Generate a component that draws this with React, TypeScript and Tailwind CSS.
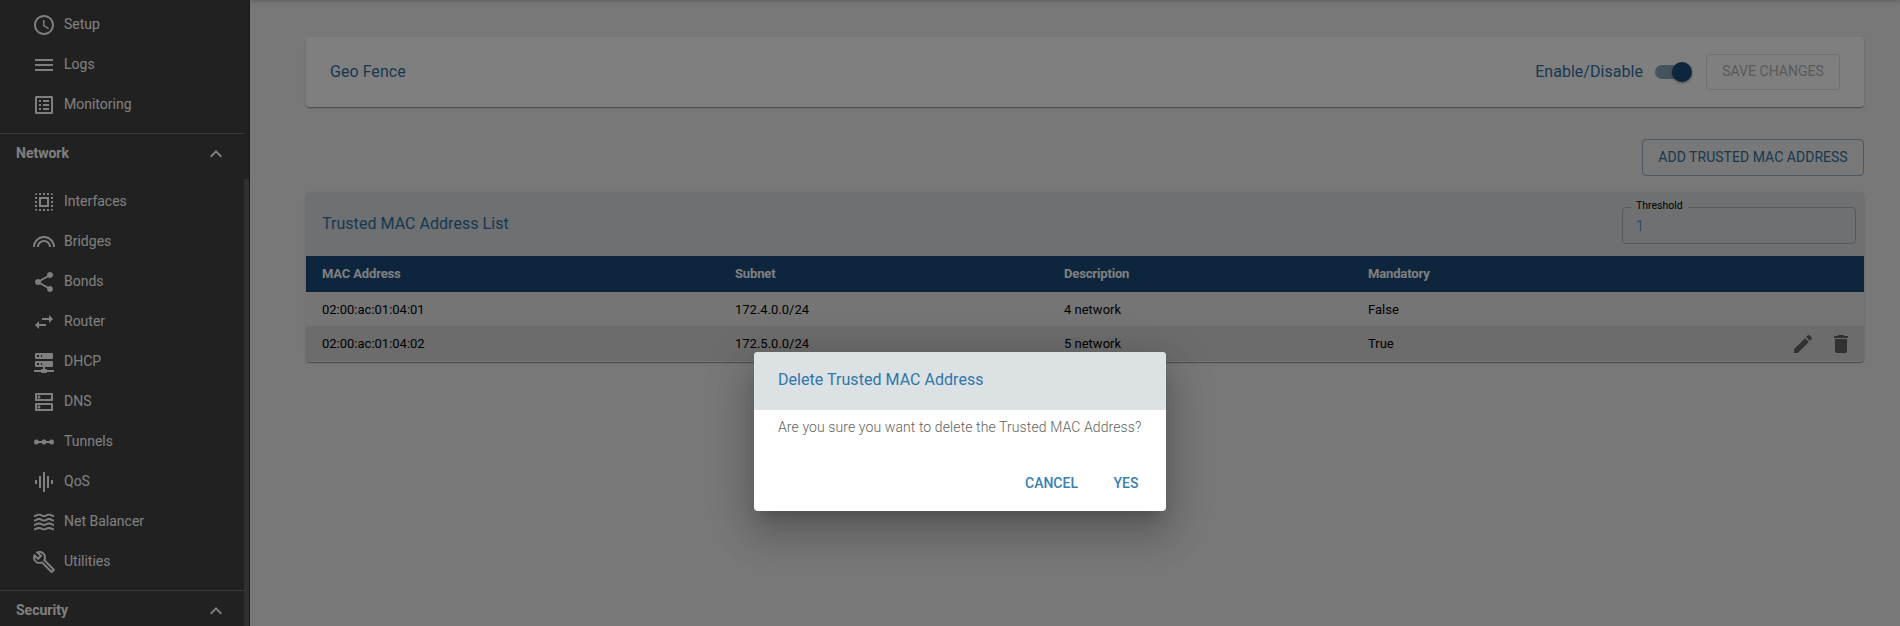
import type { ReactNode } from "react";
import {
  MdAccessTime,
  MdDelete,
  MdEdit,
  MdGraphicEq,
  MdKeyboardArrowUp,
  MdLinearScale,
  MdListAlt,
  MdMenu,
  MdOutlineBuild,
  MdOutlineDns,
  MdOutlineLooks,
  MdSelectAll,
  MdShare,
  MdSwapHoriz,
  MdWaves,
} from "react-icons/md";

function ServerNetworkIcon() {
  return (
    <svg viewBox="0 0 24 24" width="24" height="24" fill="currentColor">
      <path d="M13,19H14A1,1 0 0,1 15,20H22V22H15A1,1 0 0,1 14,23H10A1,1 0 0,1 9,22H2V20H9A1,1 0 0,1 10,19H11V17H4A1,1 0 0,1 3,16V12A1,1 0 0,1 4,11H20A1,1 0 0,1 21,12V16A1,1 0 0,1 20,17H13V19M4,3H20A1,1 0 0,1 21,4V8A1,1 0 0,1 20,9H4A1,1 0 0,1 3,8V4A1,1 0 0,1 4,3M9,7H10V5H9V7M9,15H10V13H9V15M5,5V7H7V5H5M5,13V15H7V13H5Z" />
    </svg>
  );
}

const systemItems = [
  { label: "Setup", icon: <MdAccessTime size={24} /> },
  { label: "Logs", icon: <MdMenu size={24} /> },
  { label: "Monitoring", icon: <MdListAlt size={24} /> },
];

const networkItems = [
  { label: "Interfaces", icon: <MdSelectAll size={24} /> },
  { label: "Bridges", icon: <MdOutlineLooks size={24} /> },
  { label: "Bonds", icon: <MdShare size={24} /> },
  { label: "Router", icon: <MdSwapHoriz size={24} /> },
  { label: "DHCP", icon: <ServerNetworkIcon /> },
  { label: "DNS", icon: <MdOutlineDns size={24} /> },
  { label: "Tunnels", icon: <MdLinearScale size={24} /> },
  { label: "QoS", icon: <MdGraphicEq size={24} /> },
  { label: "Net Balancer", icon: <MdWaves size={24} /> },
  { label: "Utilities", icon: <MdOutlineBuild size={24} /> },
];

const rows = [
  { mac: "02:00:ac:01:04:01", subnet: "172.4.0.0/24", description: "4 network", mandatory: "False" },
  { mac: "02:00:ac:01:04:02", subnet: "172.5.0.0/24", description: "5 network", mandatory: "True" },
];

function NavItem({ label, icon }: { label: string; icon: ReactNode }) {
  return (
    <li className="flex h-10 items-center gap-2 pl-8">
      {icon}
      <span className="pb-0.5 text-sm leading-5">{label}</span>
    </li>
  );
}

function SectionHeader({ label }: { label: string }) {
  return (
    <div className="flex h-[41px] items-center justify-between border-t border-[#757575] pr-4 pl-4">
      <span className="pb-0.5 text-sm font-bold">{label}</span>
      <MdKeyboardArrowUp size={24} />
    </div>
  );
}

function Sidebar() {
  return (
    <aside className="flex h-full w-[250px] shrink-0 border-r border-[#303030] bg-[#424242] text-white">
      <nav className="w-[244px] shrink-0">
        <ul className="pt-[5px] pb-2">
          {systemItems.map((item) => (
            <NavItem key={item.label} {...item} />
          ))}
        </ul>
        <SectionHeader label="Network" />
        <ul className="pt-2 pb-2">
          {networkItems.map((item) => (
            <NavItem key={item.label} {...item} />
          ))}
        </ul>
        <SectionHeader label="Security" />
      </nav>
      <div className="mt-[179px] w-[5px] bg-[#606060]" />
    </aside>
  );
}

const cardShadow =
  "shadow-[0_2px_1px_-1px_rgba(0,0,0,0.2),0_1px_1px_0_rgba(0,0,0,0.14),0_1px_3px_0_rgba(0,0,0,0.12)]";

function GeoFenceCard() {
  return (
    <section className={`flex h-[70px] items-center justify-between rounded bg-white px-6 ${cardShadow}`}>
      <h2 className="text-base tracking-[0.04px] text-[#32719f]">Geo Fence</h2>
      <div className="flex items-center">
        <span className="text-base tracking-[0.04px] text-[#32719f]">Enable/Disable</span>
        <div className="ml-3 flex h-3.5 w-[34px] items-center rounded-full bg-[#8ca5bc]">
          <div className="ml-[17px] size-5 shrink-0 rounded-full bg-[#1a4c7a] shadow-[0_1px_3px_rgba(0,0,0,0.4)]" />
        </div>
        <button className="ml-[17px] h-9 w-[134px] rounded border border-[#dfdfdf] pb-0.5 text-sm tracking-[0.03px] text-[#b4b4b4]">
          SAVE CHANGES
        </button>
      </div>
    </section>
  );
}

function MacListCard() {
  return (
    <section className={`mt-4 overflow-hidden rounded bg-[#eaeaea] pb-px ${cardShadow}`}>
      <div className="flex h-16 justify-between bg-[#dce0e4] pr-2 pl-4">
        <h2 className="pt-5 text-base leading-6 tracking-[0.04px] text-[#32719f]">
          Trusted MAC Address List
        </h2>
        <fieldset className="mt-[9px] h-[43px] w-[234px] rounded border border-[#b0b2b4] pl-2">
          <legend className="px-[5px] pb-0.5 text-[10.5px] leading-[10px] text-black">Threshold</legend>
          <div className="pt-[3px] pl-[5px] text-sm leading-5 font-light text-[#3a7cad]">1</div>
        </fieldset>
      </div>
      <table className="w-full table-fixed text-left align-top text-[13px] leading-5 text-black">
        <colgroup>
          <col className="w-[413px]" />
          <col className="w-[329px]" />
          <col className="w-[304px]" />
          <col />
        </colgroup>
        <thead>
          <tr className="h-9 bg-[#1a4c7a] align-top font-bold tracking-[-0.15px] text-white">
            <th className="pt-2 pl-4">MAC Address</th>
            <th className="pt-2 pl-4">Subnet</th>
            <th className="pt-2 pl-4">Description</th>
            <th className="pt-2 pl-4">Mandatory</th>
            <th />
          </tr>
        </thead>
        <tbody>
          {rows.map((row, index) => (
            <tr key={row.mac} className="h-[34px] align-top even:h-[35px] even:bg-[#d8d8d8]">
              <td className="pt-2 pl-4">{row.mac}</td>
              <td className="pt-2 pl-4">{row.subnet}</td>
              <td className="pt-2 pl-4">{row.description}</td>
              <td className="pt-2 pl-4">{row.mandatory}</td>
              <td>
                {index === 1 && (
                  <div className="flex justify-end gap-3.5 pt-1.5 pr-[11px] text-[#626262]">
                    <MdEdit size={24} />
                    <MdDelete size={24} />
                  </div>
                )}
              </td>
            </tr>
          ))}
        </tbody>
      </table>
    </section>
  );
}

function DeleteDialog() {
  return (
    <div className="flex h-[159px] w-[412px] flex-col overflow-hidden rounded bg-white">
      <h2 className="h-[58px] bg-[#dce1e4] px-6 pt-4 text-base leading-6 tracking-[0.04px] text-[#2f76aa]">
        Delete Trusted MAC Address
      </h2>
      <p className="px-6 pt-[7px] text-sm leading-5 font-light tracking-[0.1px] whitespace-nowrap text-[#5f5f5f]">
        Are you sure you want to delete the Trusted MAC Address?
      </p>
      <div className="mt-auto flex justify-end gap-2 pr-2 pb-2.5 text-sm font-medium text-[#3a7fb1]">
        <button className="h-9 w-[69px]">CANCEL</button>
        <button className="h-9 w-16">YES</button>
      </div>
    </div>
  );
}

export default function App() {
  return (
    <div className="relative h-[626px] w-full overflow-hidden font-[Roboto,sans-serif]">
      <div className="flex h-full">
        <Sidebar />
        <div className="flex-1 overflow-hidden bg-[#f0f0f0]">
          <div className="-mt-[67px] mb-[3px] h-16 shadow-[0_2px_4px_-1px_rgba(0,0,0,0.2),0_4px_5px_0_rgba(0,0,0,0.14),0_1px_10px_0_rgba(0,0,0,0.12)]" />
          <main className="pt-[37px] pr-9 pl-14">
            <GeoFenceCard />
            <div className="mt-8 flex justify-end">
              <button className="h-[37px] w-[222px] rounded border border-[#90b1c9] pb-0.5 text-sm tracking-[0.03px] text-[#32719f]">
                ADD TRUSTED MAC ADDRESS
              </button>
            </div>
            <MacListCard />
          </main>
        </div>
      </div>
      <div className="absolute inset-0 flex items-end justify-center bg-black/50 pb-[115px] pl-5">
        <div className="rounded shadow-[0_11px_15px_-7px_rgba(0,0,0,0.2),0_24px_38px_3px_rgba(0,0,0,0.14),0_9px_46px_8px_rgba(0,0,0,0.12)]">
          <DeleteDialog />
        </div>
      </div>
    </div>
  );
}
